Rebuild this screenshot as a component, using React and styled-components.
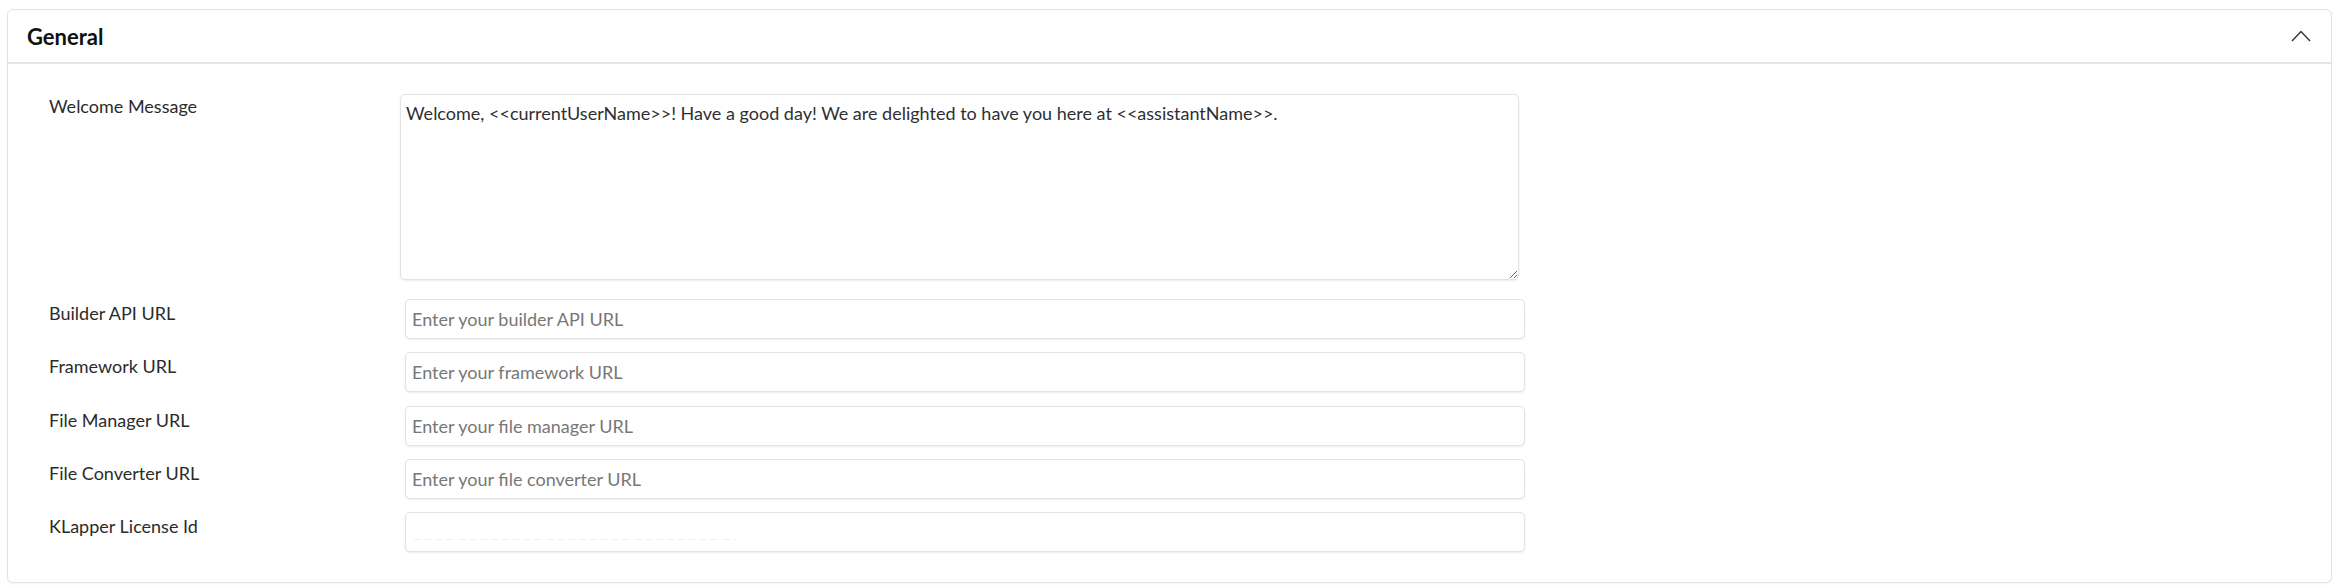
import React from 'react';
import styled, { createGlobalStyle } from 'styled-components';

const GlobalStyle = createGlobalStyle`
  html, body {
    margin: 0;
    padding: 0;
    background: #ffffff;
  }
  body {
    font-family: 'Lato', 'Liberation Sans', sans-serif;
    color: #333333;
  }
`;

const Page = styled.div`
  padding: 9px 10px 5px 7px;
`;

const Card = styled.section`
  border: 1px solid #e3e3e3;
  border-radius: 6px;
  background: #ffffff;
  box-shadow: 0 1px 2px rgba(0, 0, 0, 0.05);
`;

const Header = styled.div`
  display: flex;
  align-items: center;
  justify-content: space-between;
  height: 52px;
  padding: 0 20px 0 19px;
  border-bottom: 2px solid #e6e6e6;
`;

const Title = styled.h2`
  margin: 0;
  font-family: 'Lato', sans-serif;
  font-size: 22px;
  font-weight: 700;
  color: #111111;
`;

const Toggle = styled.button`
  display: flex;
  align-items: center;
  justify-content: center;
  padding: 0;
  border: 0;
  background: transparent;
  cursor: pointer;
`;

const Body = styled.div`
  display: flex;
  flex-direction: column;
  padding: 30px 0 30px 41px;
`;

const Row = styled.div`
  display: flex;
  align-items: flex-start;
  margin-top: ${(p) => p.$gap || 0}px;
`;

const Label = styled.label`
  width: 356px;
  flex-shrink: 0;
  padding-top: ${(p) => p.$top || 0}px;
  font-size: 18px;
  line-height: 24px;
  color: #2b2b2b;
`;

const TextArea = styled.textarea`
  box-sizing: border-box;
  width: 1119px;
  height: 186px;
  margin: 0 0 0 -5px;
  padding: 6px 5px;
  border: 1px solid #e2e2e2;
  border-radius: 5px;
  box-shadow: 0 1px 2px rgba(0, 0, 0, 0.08);
  font-family: 'Lato', sans-serif;
  font-size: 18px;
  line-height: 24px;
  color: #2f2f33;
  resize: vertical;
  outline: none;
`;

const Input = styled.input`
  box-sizing: border-box;
  width: 1120px;
  height: 40px;
  padding: 0 6px;
  border: 1px solid #e2e2e2;
  border-radius: 5px;
  box-shadow: 0 1px 2px rgba(0, 0, 0, 0.08);
  font-family: 'Lato', sans-serif;
  font-size: 18px;
  color: #2f2f33;
  outline: none;
  background: ${(p) =>
    p.$masked
      ? 'repeating-linear-gradient(90deg, #f0f0f0 0 7px, transparent 7px 11px) 8px 26px / 322px 1px no-repeat, #ffffff'
      : '#ffffff'};

  &::placeholder {
    color: #777777;
  }
`;

const ChevronUp = () => (
  <svg width="20" height="12" viewBox="0 0 20 12" fill="none">
    <path d="M1 11 L10 1.5 L19 11" stroke="#333333" strokeWidth="1.4" />
  </svg>
);

const fields = [
  { label: 'Builder API URL', placeholder: 'Enter your builder API URL' },
  { label: 'Framework URL', placeholder: 'Enter your framework URL' },
  { label: 'File Manager URL', placeholder: 'Enter your file manager URL' },
  { label: 'File Converter URL', placeholder: 'Enter your file converter URL' },
  { label: 'KLapper License Id', placeholder: '', masked: true },
];

export default function App() {
  return (
    <>
      <GlobalStyle />
      <Page>
        <Card>
          <Header>
            <Title>General</Title>
            <Toggle aria-label="Collapse">
              <ChevronUp />
            </Toggle>
          </Header>
          <Body>
            <Row>
              <Label $top={0}>Welcome Message</Label>
              <TextArea
                defaultValue="Welcome, <<currentUserName>>! Have a good day! We are delighted to have you here at <<assistantName>>."
              />
            </Row>
            {fields.map((f, i) => (
              <Row key={f.label} $gap={i === 0 ? 19 : 13.25}>
                <Label $top={2}>{f.label}</Label>
                <Input placeholder={f.placeholder} $masked={f.masked} />
              </Row>
            ))}
          </Body>
        </Card>
      </Page>
    </>
  );
}
